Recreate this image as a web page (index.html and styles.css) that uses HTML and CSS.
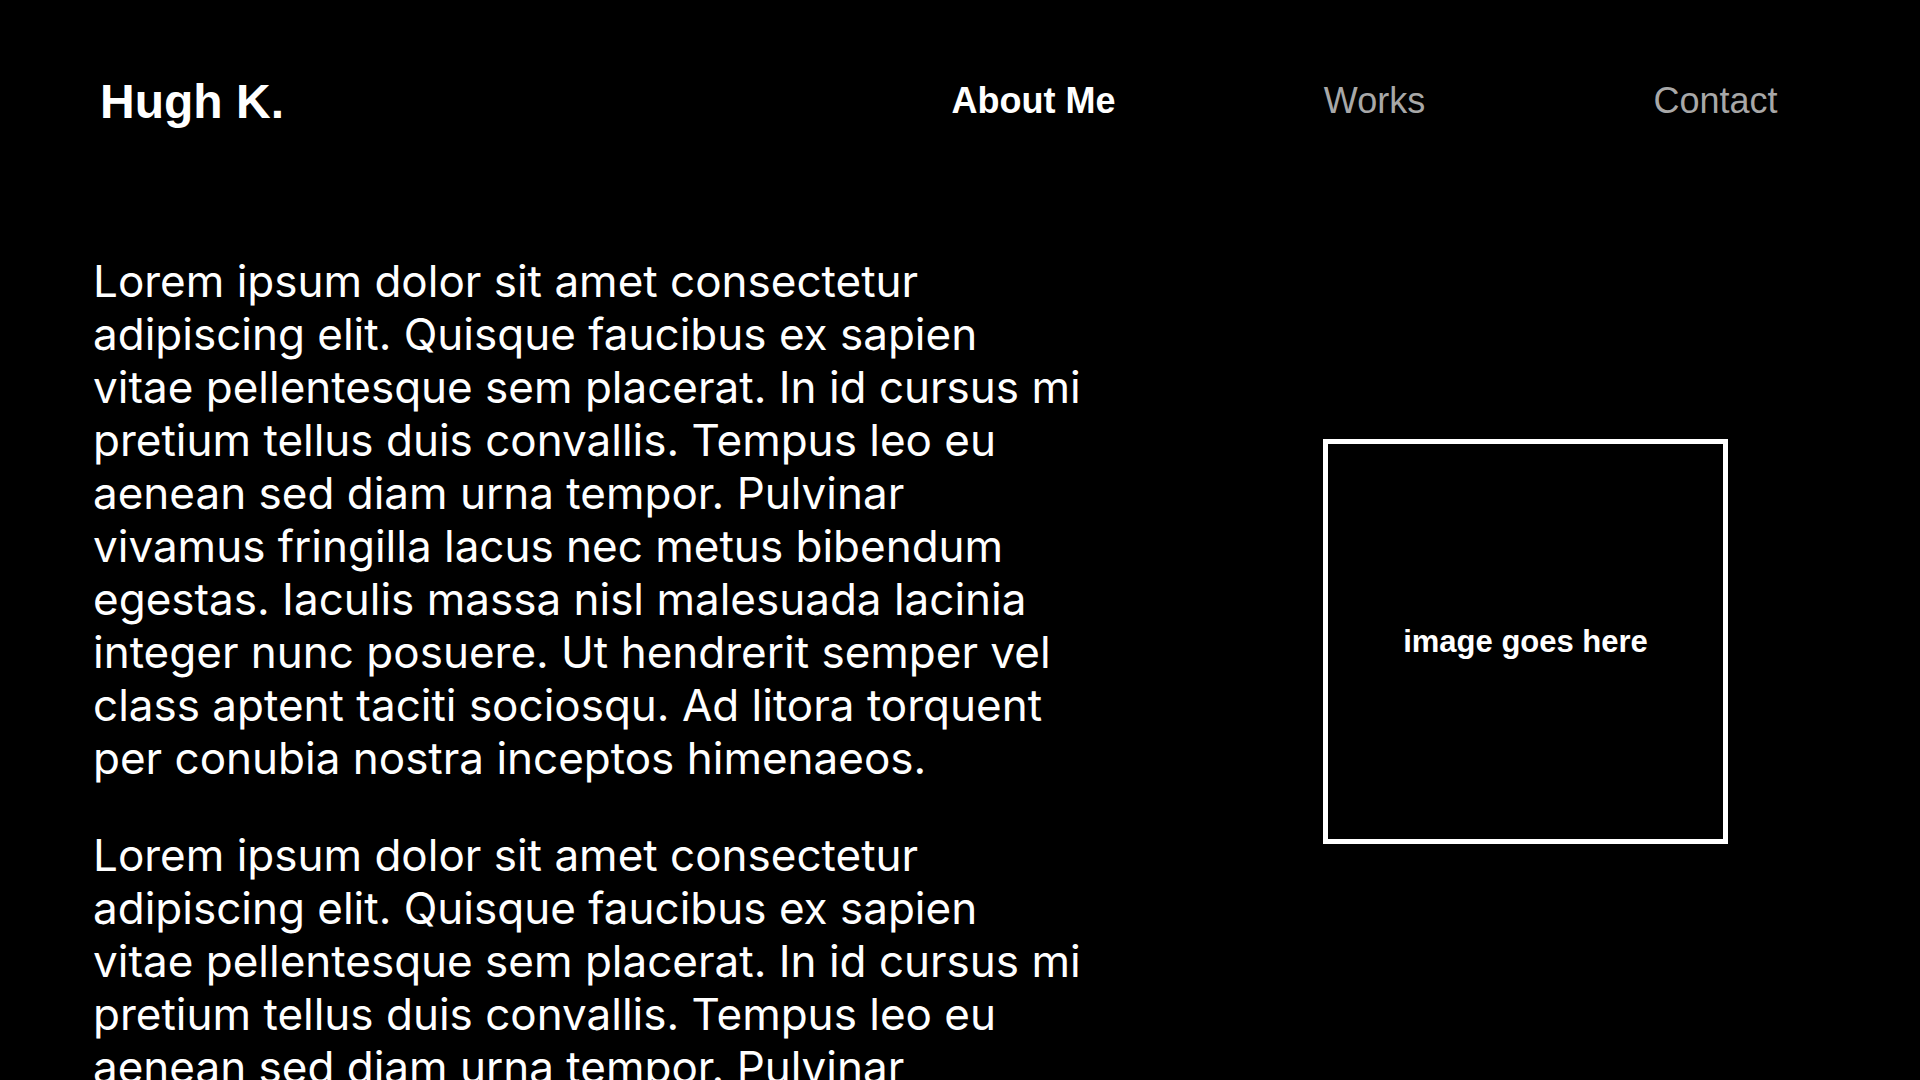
FILE: index.html
```html
<!DOCTYPE html>
<html lang="en">
<head>
<meta charset="utf-8">
<title>Hugh K.</title>
<link rel="stylesheet" href="styles.css">
</head>
<body>
<header class="site-header">
  <div class="logo">Hugh K.</div>
  <nav class="nav">
    <a class="nav-link active" href="#">About Me</a>
    <a class="nav-link" href="#">Works</a>
    <a class="nav-link" href="#">Contact</a>
  </nav>
</header>
<main class="content">
  <section class="text-col">
    <p class="para">Lorem ipsum dolor sit amet consectetur adipiscing elit. Quisque faucibus ex sapien vitae pellentesque sem placerat. In id cursus mi pretium tellus duis convallis. Tempus leo eu aenean sed diam urna tempor. Pulvinar vivamus fringilla lacus nec metus bibendum egestas. Iaculis massa nisl malesuada lacinia integer nunc posuere. Ut hendrerit semper vel class aptent taciti sociosqu. Ad litora torquent per conubia nostra inceptos himenaeos.</p>
    <p class="para">Lorem ipsum dolor sit amet consectetur adipiscing elit. Quisque faucibus ex sapien vitae pellentesque sem placerat. In id cursus mi pretium tellus duis convallis. Tempus leo eu aenean sed diam urna tempor. Pulvinar vivamus fringilla lacus nec metus bibendum egestas. Iaculis massa nisl malesuada lacinia integer nunc posuere. Ut hendrerit semper vel class aptent taciti sociosqu. Ad litora torquent per conubia nostra inceptos himenaeos.</p>
  </section>
  <aside class="image-col">
    <div class="image-box">image goes here</div>
  </aside>
</main>
</body>
</html>
```

FILE: styles.css
```css
html, body {
  margin: 0;
  padding: 0;
  background: #000;
  color: #fff;
}

body {
  font-family: "Liberation Sans", Arial, sans-serif;
  overflow: hidden;
  height: 1080px;
}

.site-header {
  display: flex;
  align-items: center;
  height: 202px;
  padding-left: 100px;
  padding-right: 34px;
  box-sizing: border-box;
}

.logo {
  font-size: 48px;
  font-weight: 700;
  color: #fff;
}

.nav {
  margin-left: auto;
  display: flex;
  width: 1023px;
}

.nav-link {
  flex: 1;
  text-align: center;
  font-size: 36px;
  color: #a8a8a8;
  text-decoration: none;
}

.nav-link.active {
  color: #fff;
  font-weight: 700;
}

.content {
  display: grid;
  grid-template-columns: 1131px 1fr;
  padding-top: 53px;
}

.text-col {
  padding-left: 93px;
}

.para {
  max-width: 990px;
  margin: 0 0 44px 0;
  font-family: Inter, "Liberation Sans", sans-serif;
  font-size: 44px;
  line-height: 53px;
  color: #fff;
}

.image-col {
  display: flex;
  justify-content: center;
  align-items: flex-start;
}

.image-box {
  margin-top: 184px;
  width: 405px;
  height: 405px;
  box-sizing: border-box;
  border: 5px solid #fff;
  display: flex;
  align-items: center;
  justify-content: center;
  font-size: 31px;
  font-weight: 700;
}
```
